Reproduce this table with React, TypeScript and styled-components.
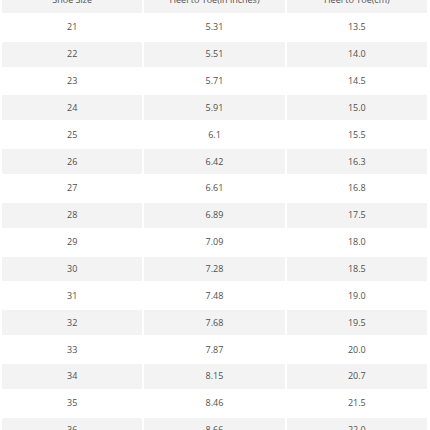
import React from "react";
import styled, { createGlobalStyle } from "styled-components";

const Global = createGlobalStyle`
  html, body { margin: 0; padding: 0; background: #fff; overflow: hidden; }
`;

const Wrap = styled.div`
  width: 429px;
  margin-top: -14px;
`;

const Table = styled.table`
  width: 100%;
  border-collapse: separate;
  border-spacing: 2px;
  table-layout: fixed;
  font-family: "Open Sans", "Liberation Sans", sans-serif;
  font-size: 9px;
  color: #505050;
`;

const Row = styled.tr<{ $shade: boolean }>`
  background: ${(p) => (p.$shade ? "#f3f3f3" : "#fff")};
`;

const Cell = styled.td`
  height: 24.86px;
  padding: 0;
  text-align: center;
  vertical-align: middle;
  line-height: 12px;
`;

const HeadCell = styled(Cell).attrs({ as: "th" })`
  font-weight: 400;
`;

const data: [string, string, string][] = [
  ["21", "5.31", "13.5"],
  ["22", "5.51", "14.0"],
  ["23", "5.71", "14.5"],
  ["24", "5.91", "15.0"],
  ["25", "6.1", "15.5"],
  ["26", "6.42", "16.3"],
  ["27", "6.61", "16.8"],
  ["28", "6.89", "17.5"],
  ["29", "7.09", "18.0"],
  ["30", "7.28", "18.5"],
  ["31", "7.48", "19.0"],
  ["32", "7.68", "19.5"],
  ["33", "7.87", "20.0"],
  ["34", "8.15", "20.7"],
  ["35", "8.46", "21.5"],
  ["36", "8.66", "22.0"],
  ["37", "8.86", "22.5"],
];

export default function App() {
  return (
    <Wrap>
      <Global />
      <Table>
        <thead>
          <Row $shade>
            <HeadCell>Shoe Size</HeadCell>
            <HeadCell>Heel to Toe(in inches)</HeadCell>
            <HeadCell>Heel to Toe(cm)</HeadCell>
          </Row>
        </thead>
        <tbody>
          {data.map((r, i) => (
            <Row key={r[0]} $shade={i % 2 === 1}>
              <Cell>{r[0]}</Cell>
              <Cell>{r[1]}</Cell>
              <Cell>{r[2]}</Cell>
            </Row>
          ))}
        </tbody>
      </Table>
    </Wrap>
  );
}
